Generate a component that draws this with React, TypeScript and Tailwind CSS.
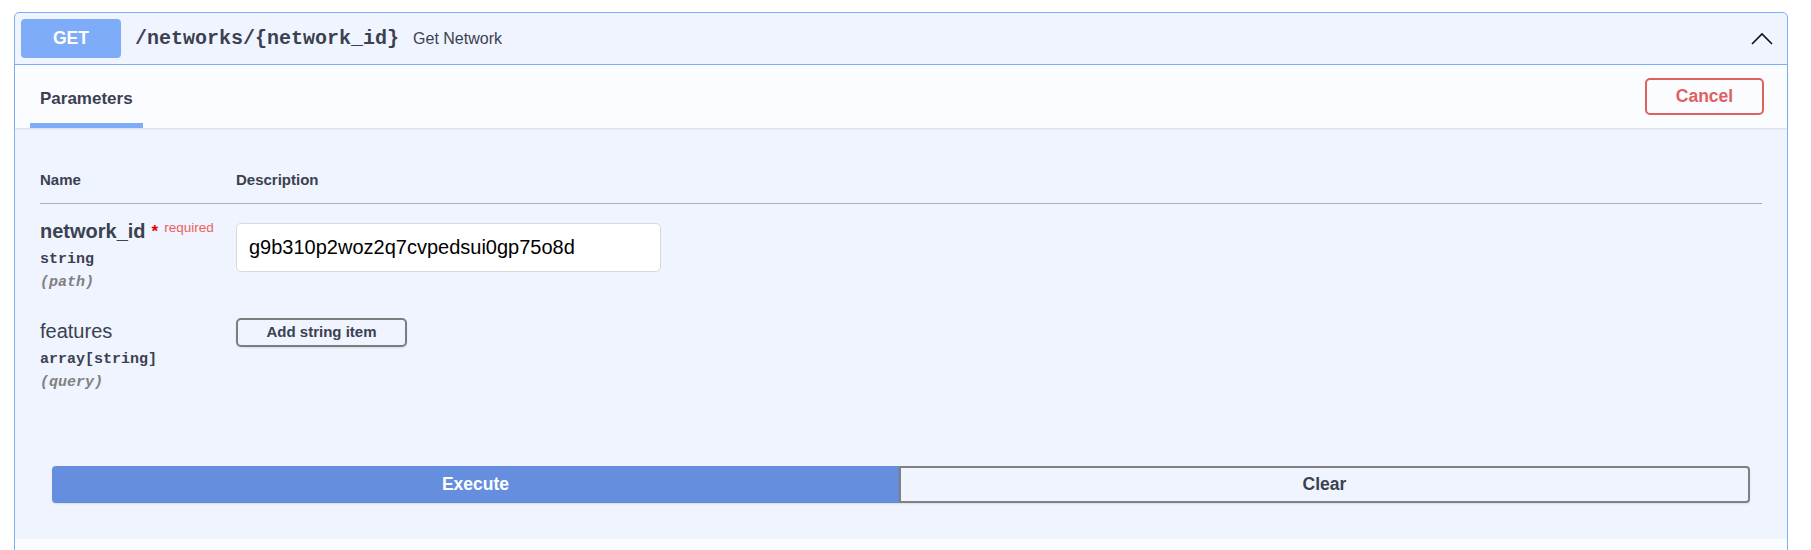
const sans = "font-['Liberation_Sans',Arial,sans-serif]";
const mono = "font-['Liberation_Mono','Courier_New',monospace]";

const ParamName = ({
  name,
  type,
  where,
  required,
}: {
  name: string;
  type: string;
  where: string;
  required?: boolean;
}) => {
  return (
    <div className="w-[196px] shrink-0">
      <div className="flex items-start leading-[23px]">
        <span
          className={`text-[20px] text-[#3b4151] ${required ? "font-bold" : "font-normal"}`}
        >
          {name}
        </span>
        {required && (
          <>
            <span className="ml-[6px] text-[17px] font-bold text-[#e00000] leading-[23px]">
              *
            </span>
            <span className="ml-[6px] -mt-[4px] text-[13.5px] text-[#ec5f5f] leading-[23px]">
              required
            </span>
          </>
        )}
      </div>
      <div
        className={`mt-[5px] text-[15px] font-bold leading-[23px] text-[#3b4151] ${mono}`}
      >
        {type}
      </div>
      <div
        className={`text-[15px] font-bold italic leading-[23px] text-[#808080] ${mono}`}
      >
        ({where})
      </div>
    </div>
  );
};

const App = () => {
  return (
    <div className={`h-[550px] overflow-hidden bg-white pl-[14px] pr-[23px] pt-[12px] ${sans}`}>
      <div className="h-[600px] rounded-[5px] border border-[#7eaffa] bg-[#eff4fe]">
        {/* summary */}
        <div className="flex h-[52px] items-center border-b border-[#7eaffa] pl-[6px] pr-[14px]">
          <div className="flex h-[39px] w-[100px] items-center justify-center rounded-[4px] bg-[#7eacf9] text-[17.5px] font-bold text-white">
            GET
          </div>
          <span className={`ml-[14px] text-[20px] font-bold text-[#3b4151] ${mono}`}>
            /networks/{"{network_id}"}
          </span>
          <span className="ml-[14px] text-[16px] text-[#3b4151]">Get Network</span>
          <svg
            className="ml-auto"
            width="22"
            height="13"
            viewBox="0 0 22 13"
            fill="none"
          >
            <polyline
              points="1,12 11,2 21,12"
              stroke="#111"
              strokeWidth="1.6"
            />
          </svg>
        </div>

        {/* section header */}
        <div className="flex h-[63px] items-stretch bg-[#fafcff] pr-[23px] shadow-[0_1px_2px_rgba(0,0,0,0.1)]">
          <div className="ml-[15px] flex items-center border-b-[5px] border-[#7eacf9] px-[10px] pt-[10px] text-[17px] font-bold text-[#3b4151]">
            Parameters
          </div>
          <div className="ml-auto flex items-center">
            <button className="h-[37px] w-[119px] rounded-[5px] border-2 border-[#e05f5f] text-[17.5px] font-bold text-[#e05f5f]">
              Cancel
            </button>
          </div>
        </div>

        {/* parameters */}
        <div className="px-[25px] pt-[43px] pb-[13px]">
          <div className="flex border-b border-[#a9b0bd] pb-[14px] text-[15px] font-bold leading-[18px] text-[#3b4151]">
            <div className="w-[196px]">Name</div>
            <div>Description</div>
          </div>

          <div className="flex pt-[16px] pb-[13px]">
            <ParamName name="network_id" type="string" where="path" required />
            <div>
              <input
                readOnly
                defaultValue="g9b310p2woz2q7cvpedsui0gp75o8d"
                className="mt-[3px] h-[49px] w-[425px] rounded-[5px] border border-[#d9d9d9] bg-white px-[12px] text-[20px] text-black outline-none"
              />
            </div>
          </div>

          <div className="flex pt-[11px]">
            <div className="pt-[2px]">
              <ParamName name="features" type="array[string]" where="query" />
            </div>
            <div>
              <button className="h-[29px] w-[171px] rounded-[5px] border-2 border-[#7d7d7d] text-[15px] font-bold text-[#3b4151] shadow-[0_1px_2px_rgba(0,0,0,0.1)]">
                Add string item
              </button>
            </div>
          </div>
        </div>

        {/* execute */}
        <div className="flex px-[37px] pt-[59px] pb-[36px]">
          <button className="h-[37px] flex-1 rounded-l-[4px] bg-[#658fde] text-[17.5px] font-bold text-white shadow-[0_1px_2px_rgba(0,0,0,0.1)]">
            Execute
          </button>
          <button className="h-[37px] flex-1 rounded-r-[4px] border-2 border-[#808080] text-[17.5px] font-bold text-[#3b4151] shadow-[0_1px_2px_rgba(0,0,0,0.1)]">
            Clear
          </button>
        </div>

        <div className="h-[60px] bg-[#fafcff]" />
      </div>
    </div>
  );
};

export default App;
